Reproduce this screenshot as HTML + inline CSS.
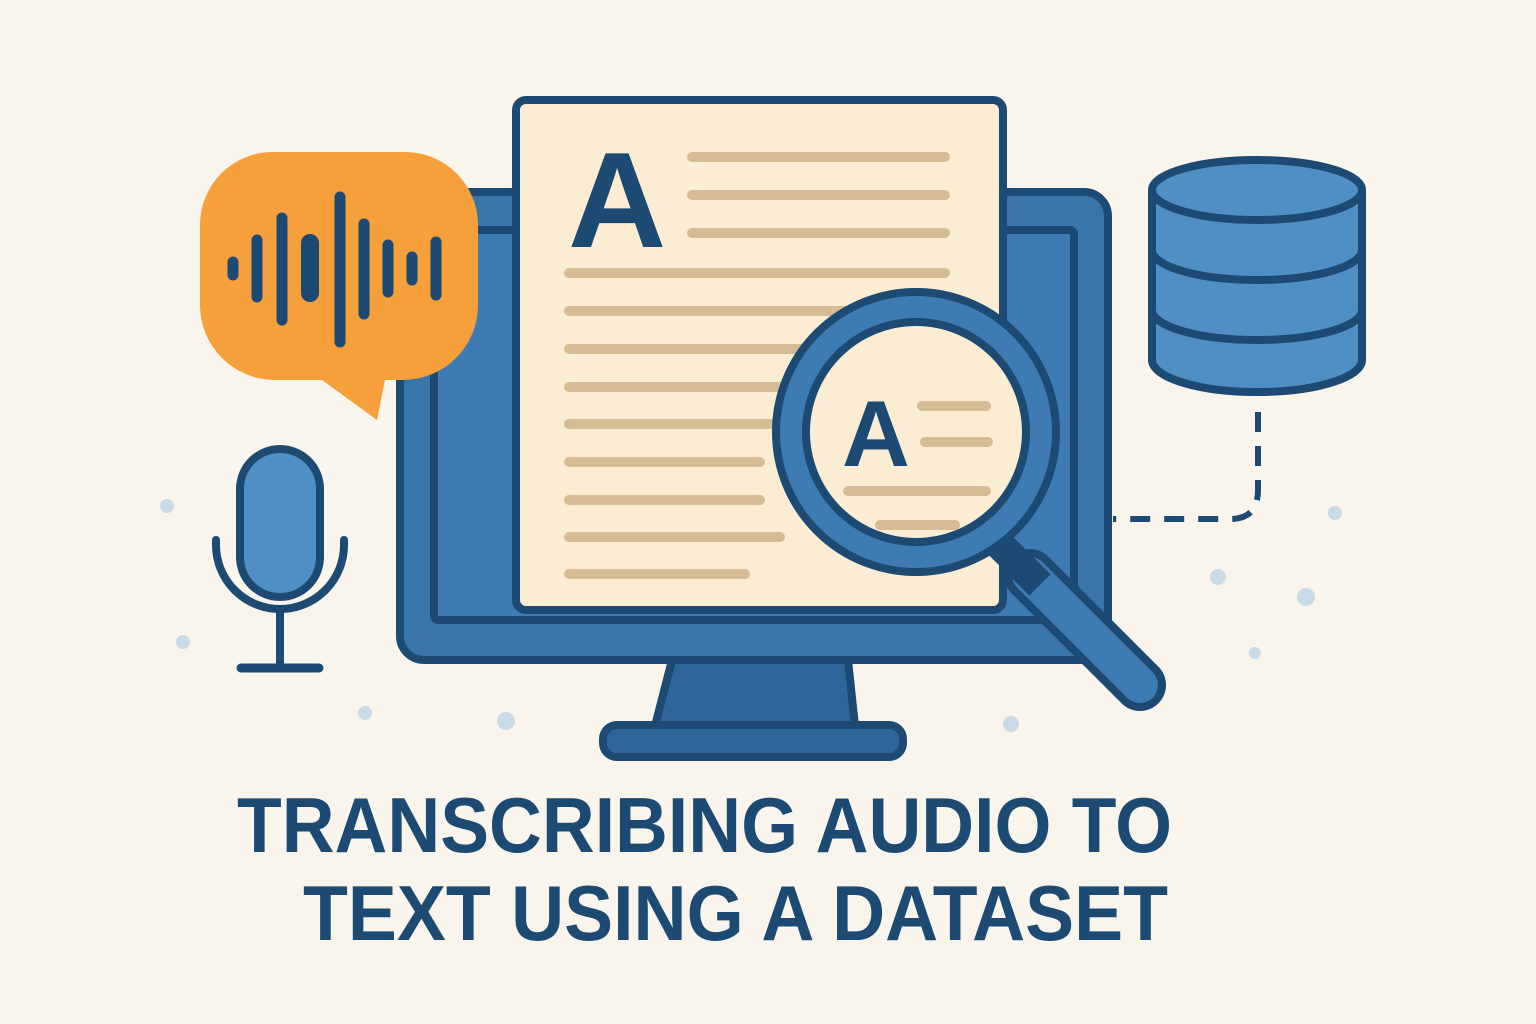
<!DOCTYPE html>
<html><head><meta charset="utf-8"><style>
html,body{margin:0;padding:0;background:#f9f5ec;}
svg{display:block}
</style></head><body>
<svg width="1536" height="1024" viewBox="0 0 1536 1024" xmlns="http://www.w3.org/2000/svg">
<rect width="1536" height="1024" fill="#f9f5ec"/>
<g fill="#c9dbe8">
<circle cx="167" cy="506" r="7"/><circle cx="183" cy="642" r="7"/><circle cx="365" cy="713" r="7"/><circle cx="506" cy="721" r="9"/><circle cx="1011" cy="724" r="8"/><circle cx="1218" cy="577" r="8"/><circle cx="1306" cy="597" r="9"/><circle cx="1255" cy="653" r="6"/><circle cx="1335" cy="513" r="7"/>
</g>
<!-- stand -->
<path d="M672 660 L848 660 L855 726 L655 726 Z" fill="#2f6598" stroke="#1d4a72" stroke-width="8" stroke-linejoin="round"/>
<rect x="603" y="725" width="300" height="32" rx="14" fill="#2f6598" stroke="#1d4a72" stroke-width="8"/>
<!-- monitor -->
<rect x="400" y="192" width="708" height="468" rx="24" fill="#3a75aa" stroke="#1d4a72" stroke-width="8"/>
<rect x="434" y="230" width="640" height="390" rx="4" fill="#3d7bb2" stroke="#1d4a72" stroke-width="8"/>
<!-- paper -->
<rect x="516" y="100" width="487" height="510" rx="10" fill="#fbecd4" stroke="#1d4a72" stroke-width="8"/>
<text x="568" y="247" font-family="Liberation Sans, sans-serif" font-weight="bold" font-size="136" fill="#1d4a72">A</text>
<g stroke="#d6bc94" stroke-width="10" stroke-linecap="round">
<line x1="692" y1="157" x2="945" y2="157"/><line x1="692" y1="195" x2="945" y2="195"/><line x1="692" y1="233" x2="945" y2="233"/>
<line x1="569" y1="273" x2="945" y2="273"/><line x1="569" y1="311" x2="880" y2="311"/><line x1="569" y1="349" x2="820" y2="349"/>
<line x1="569" y1="387" x2="790" y2="387"/><line x1="569" y1="424" x2="775" y2="424"/><line x1="569" y1="462" x2="760" y2="462"/>
<line x1="569" y1="500" x2="760" y2="500"/><line x1="569" y1="537" x2="780" y2="537"/><line x1="569" y1="574" x2="745" y2="574"/>
</g>
<!-- magnifier handle -->
<line x1="1030" y1="575" x2="1140" y2="685" stroke="#1d4a72" stroke-width="52" stroke-linecap="round"/>
<line x1="1030" y1="575" x2="1140" y2="685" stroke="#3d7bb2" stroke-width="36" stroke-linecap="round"/>
<line x1="1000" y1="545" x2="1040" y2="585" stroke="#1d4a72" stroke-width="30"/>
<circle cx="916" cy="432" r="140" fill="#3d7bb2" stroke="#1d4a72" stroke-width="8"/>
<circle cx="916" cy="432" r="110" fill="#fbecd4" stroke="#1d4a72" stroke-width="8"/>
<text x="842" y="466" font-family="Liberation Sans, sans-serif" font-weight="bold" font-size="94" fill="#1d4a72">A</text>
<g stroke="#d6bc94" stroke-width="10" stroke-linecap="round">
<line x1="922" y1="406" x2="986" y2="406"/><line x1="925" y1="442" x2="988" y2="442"/><line x1="848" y1="491" x2="986" y2="491"/><line x1="880" y1="525" x2="955" y2="525"/>
</g>
<!-- speech bubble -->
<path d="M275 152 H405 A73 73 0 0 1 478 225 V305 A75 75 0 0 1 403 380 H385 L377 420 L322 380 H275 A75 75 0 0 1 200 305 V225 A73 73 0 0 1 275 152 Z" fill="#f6a03c"/>
<g stroke="#1d4a72" stroke-width="11" stroke-linecap="round">
<line x1="233" y1="262" x2="233" y2="275"/><line x1="257" y1="240" x2="257" y2="297"/><line x1="282" y1="218" x2="282" y2="320"/>
<line x1="340" y1="197" x2="340" y2="342"/><line x1="364" y1="224" x2="364" y2="314"/><line x1="388" y1="245" x2="388" y2="292"/>
<line x1="412" y1="257" x2="412" y2="280"/><line x1="436" y1="242" x2="436" y2="295"/>
</g>
<rect x="301" y="234" width="18" height="68" rx="9" fill="#1d4a72"/>
<!-- mic -->
<rect x="240" y="449" width="80" height="148" rx="40" fill="#4f8fc4" stroke="#1d4a72" stroke-width="8"/>
<path d="M216 540 V545 A64 64 0 0 0 344 545 V540" fill="none" stroke="#1d4a72" stroke-width="8" stroke-linecap="round"/>
<line x1="280" y1="610" x2="280" y2="668" stroke="#1d4a72" stroke-width="8"/>
<line x1="241" y1="668" x2="319" y2="668" stroke="#1d4a72" stroke-width="9" stroke-linecap="round"/>
<!-- database -->
<path d="M1152 190 V360 A105 32 0 0 0 1362 360 V190" fill="#4f8fc4" stroke="#1d4a72" stroke-width="8"/>
<path d="M1152 250 A105 30 0 0 0 1362 250 M1152 310 A105 30 0 0 0 1362 310" fill="none" stroke="#1d4a72" stroke-width="8"/>
<ellipse cx="1257" cy="190" rx="105" ry="30" fill="#4f8fc4" stroke="#1d4a72" stroke-width="8"/>
<path d="M1258 412 V490 Q1258 519 1230 519 H1113" fill="none" stroke="#1d4a72" stroke-width="6" stroke-dasharray="20 14"/>
<!-- title -->
<g font-family="Liberation Sans, sans-serif" font-weight="bold" font-size="78" fill="#1d4a72">
<text x="237" y="852" textLength="935" lengthAdjust="spacingAndGlyphs">TRANSCRIBING AUDIO TO</text>
<text x="303" y="940" textLength="865" lengthAdjust="spacingAndGlyphs">TEXT USING A DATASET</text>
</g>
</svg>
</body></html>
